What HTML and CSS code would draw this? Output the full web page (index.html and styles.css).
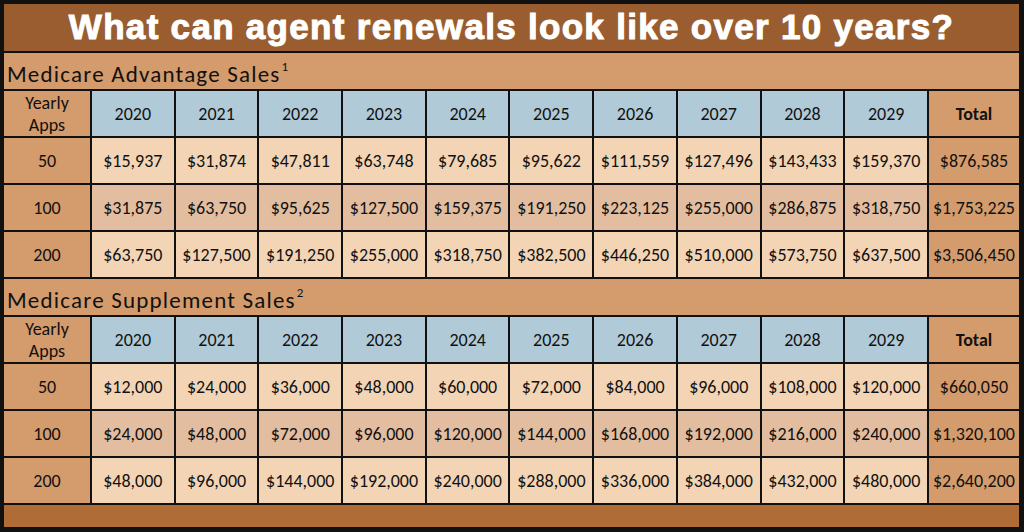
FILE: index.html
```html
<!DOCTYPE html>
<html>
<head>
<meta charset="utf-8">
<link rel="stylesheet" href="styles.css">
</head>
<body>
<div class="board">
  <div class="title span">What can agent renewals look like over 10 years?</div>

  <div class="section span"><span class="sec-text">Medicare Advantage Sales</span><span class="sup">1</span></div>
  <div class="side head2">Yearly<br>Apps</div>
  <div class="yr">2020</div><div class="yr">2021</div><div class="yr">2022</div><div class="yr">2023</div><div class="yr">2024</div>
  <div class="yr">2025</div><div class="yr">2026</div><div class="yr">2027</div><div class="yr">2028</div><div class="yr">2029</div>
  <div class="tot bold">Total</div>

  <div class="side">50</div>
  <div class="c">$15,937</div><div class="c">$31,874</div><div class="c">$47,811</div><div class="c">$63,748</div><div class="c">$79,685</div>
  <div class="c">$95,622</div><div class="c">$111,559</div><div class="c">$127,496</div><div class="c">$143,433</div><div class="c">$159,370</div>
  <div class="tot">$876,585</div>

  <div class="side">100</div>
  <div class="c alt">$31,875</div><div class="c alt">$63,750</div><div class="c alt">$95,625</div><div class="c alt">$127,500</div><div class="c alt">$159,375</div>
  <div class="c alt">$191,250</div><div class="c alt">$223,125</div><div class="c alt">$255,000</div><div class="c alt">$286,875</div><div class="c alt">$318,750</div>
  <div class="tot">$1,753,225</div>

  <div class="side">200</div>
  <div class="c">$63,750</div><div class="c">$127,500</div><div class="c">$191,250</div><div class="c">$255,000</div><div class="c">$318,750</div>
  <div class="c">$382,500</div><div class="c">$446,250</div><div class="c">$510,000</div><div class="c">$573,750</div><div class="c">$637,500</div>
  <div class="tot">$3,506,450</div>

  <div class="section span"><span class="sec-text">Medicare Supplement Sales</span><span class="sup">2</span></div>
  <div class="side head2">Yearly<br>Apps</div>
  <div class="yr">2020</div><div class="yr">2021</div><div class="yr">2022</div><div class="yr">2023</div><div class="yr">2024</div>
  <div class="yr">2025</div><div class="yr">2026</div><div class="yr">2027</div><div class="yr">2028</div><div class="yr">2029</div>
  <div class="tot bold">Total</div>

  <div class="side">50</div>
  <div class="c">$12,000</div><div class="c">$24,000</div><div class="c">$36,000</div><div class="c">$48,000</div><div class="c">$60,000</div>
  <div class="c">$72,000</div><div class="c">$84,000</div><div class="c">$96,000</div><div class="c">$108,000</div><div class="c">$120,000</div>
  <div class="tot">$660,050</div>

  <div class="side">100</div>
  <div class="c alt">$24,000</div><div class="c alt">$48,000</div><div class="c alt">$72,000</div><div class="c alt">$96,000</div><div class="c alt">$120,000</div>
  <div class="c alt">$144,000</div><div class="c alt">$168,000</div><div class="c alt">$192,000</div><div class="c alt">$216,000</div><div class="c alt">$240,000</div>
  <div class="tot">$1,320,100</div>

  <div class="side">200</div>
  <div class="c">$48,000</div><div class="c">$96,000</div><div class="c">$144,000</div><div class="c">$192,000</div><div class="c">$240,000</div>
  <div class="c">$288,000</div><div class="c">$336,000</div><div class="c">$384,000</div><div class="c">$432,000</div><div class="c">$480,000</div>
  <div class="tot">$2,640,200</div>

  <div class="bottom span"></div>
</div>
</body>
</html>
```

FILE: styles.css
```css
html, body {
  margin: 0;
  padding: 0;
  background: #000;
}

.board {
  width: 1024px;
  height: 532px;
  box-sizing: border-box;
  padding: 4px 5px 5px 4px;
  background: #111;
  display: grid;
  grid-template-columns: 86px repeat(10, 1fr) 90px;
  grid-template-rows: 47px 36px 45px 45px 45px 45px 36px 45px 45px 45px 45px 22px;
  gap: 2px;
  font-family: "Carlito", "Lato", sans-serif;
  font-size: 18px;
  color: #111;
}

.board > div {
  display: flex;
  align-items: center;
  justify-content: center;
  text-align: center;
}

.span {
  grid-column: 1 / -1;
}

.title {
  background: #995d30;
  color: #fff;
  font-family: "Liberation Sans", Arial, sans-serif;
  font-weight: bold;
  font-size: 35px;
  letter-spacing: 1.3px;
  -webkit-text-stroke: 1px #fff;
  padding-bottom: 2px;
}

.board > .section {
  background: #d49b6c;
  justify-content: flex-start;
  align-items: flex-end;
  padding: 0 0 3px 3px;
  line-height: 1;
}

.sec-text {
  font-size: 23px;
  letter-spacing: 1.2px;
}

.sup {
  align-self: flex-start;
  font-size: 13px;
  margin-top: 7px;
  margin-left: 1px;
}

.side {
  background: #d49b6c;
}

.head2 {
  line-height: 22px;
}

.yr {
  background: #b0cad7;
}

.tot {
  background: #d49b6c;
}

.bold {
  font-weight: bold;
}

.c {
  background: #f3d5b6;
}

.c.alt {
  background: #e3bd9f;
}

.bottom {
  background: #b06c36;
}
```
